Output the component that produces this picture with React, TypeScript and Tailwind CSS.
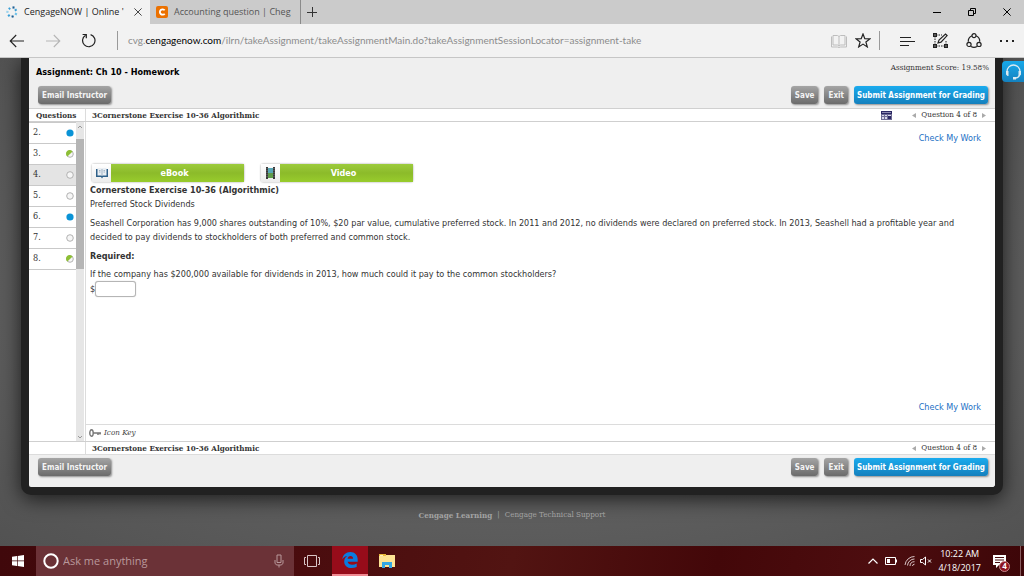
import React from "react";

type Status = "done" | "partial" | "empty";

const questions: { id: number; status: Status }[] = [
  { id: 2, status: "done" },
  { id: 3, status: "partial" },
  { id: 4, status: "empty" },
  { id: 5, status: "empty" },
  { id: 6, status: "done" },
  { id: 7, status: "empty" },
  { id: 8, status: "partial" },
];

const current = 4;

const StatusDot = ({ status }: { status: Status }) => (
  <svg width="8" height="8" viewBox="0 0 8 8">
    {status === "done" && <circle cx="4" cy="4" r="3.6" fill="#0a93d6" />}
    {status !== "done" && (
      <circle cx="4" cy="4" r="3.3" fill="#f6f6f6" stroke="#a9a9a9" strokeWidth="0.9" />
    )}
    {status === "partial" && (
      <path d="M6.6 1.4A3.7 3.7 0 1 0 1.4 6.6Z" fill="#8dbf35" />
    )}
  </svg>
);

const GreyButton = ({ children }: { children: React.ReactNode }) => (
  <button
    type="button"
    className="h-[18px] rounded-[3px] bg-linear-to-b from-[#a5a5a5] to-[#6b6b6b] px-1 font-['DejaVu_Sans_Condensed','DejaVu_Sans',sans-serif] text-[8px] leading-[19px] font-bold whitespace-nowrap text-[#f4f4f4] shadow-[1px_1px_2px_rgba(0,0,0,0.4)]"
  >
    {children}
  </button>
);

const ActionBar = () => (
  <div className="flex items-center justify-between pr-[7px] pl-[9px]">
    <GreyButton>Email Instructor</GreyButton>
    <div className="flex gap-[6px]">
      <GreyButton>Save</GreyButton>
      <GreyButton>Exit</GreyButton>
      <button
        type="button"
        className="h-[18px] rounded-[3px] bg-linear-to-b from-[#1aabee] to-[#1580bd] px-[3px] font-['DejaVu_Sans_Condensed','DejaVu_Sans',sans-serif] text-[8px] leading-[19px] font-bold whitespace-nowrap text-white shadow-[1px_1px_2px_rgba(0,0,0,0.4)]"
      >
        Submit Assignment for Grading
      </button>
    </div>
  </div>
);

const Pager = () => (
  <div className="flex items-center gap-[5px] pr-[9px] text-[#333]">
    <button type="button" aria-label="Previous question">
      <svg width="4" height="5" viewBox="0 0 4 5">
        <path d="M4 0v5L0 2.5z" fill="#aaa" />
      </svg>
    </button>
    <span>Question 4 of 8</span>
    <button type="button" aria-label="Next question">
      <svg width="4" height="5" viewBox="0 0 4 5">
        <path d="M0 0v5l4-2.5z" fill="#aaa" />
      </svg>
    </button>
  </div>
);

const TitleRow = ({ label, calculator }: { label?: string; calculator?: boolean }) => (
  <div className="flex h-3 bg-white font-['DejaVu_Serif_Condensed','DejaVu_Serif',serif] text-[8px] leading-3">
    <div className="w-[57px] shrink-0 border-r border-[#dcdcdc] pl-[7px] font-bold text-[#333]">
      {label}
    </div>
    <div className="flex flex-1 items-center pl-[6px]">
      <h2 className="flex-1 font-bold text-[#333]">3Cornerstone Exercise 10-36 Algorithmic</h2>
      {calculator && (
        <button type="button" aria-label="Calculator" className="mr-5">
          <svg width="11" height="10" viewBox="0 0 11 10">
            <path d="M0 1h11v9H0z" fill="#6d6b93" />
            <path d="M0 1h11v3H0z" fill="#2a2763" />
            <path d="M1 2h9v1H1z" fill="#8b89b0" />
            <path d="M1 5h2v1H1zM4 5h2v1H4zM7 5h3v1H7zM1 7h2v2H1zM4 7h2v2H4z" fill="#d8d8ea" />
            <path d="M7 6h3v3H7z" fill="#2a2763" />
          </svg>
        </button>
      )}
      <Pager />
    </div>
  </div>
);

const ResourceButton = ({ label, children }: { label: string; children: React.ReactNode }) => (
  <button
    type="button"
    className="flex h-[18px] w-[152px] rounded-[2px] shadow-[0_0_2px_rgba(0,0,0,0.45)]"
  >
    <span className="flex h-full w-[19px] items-center justify-center bg-linear-to-b from-white to-[#ececec]">
      {children}
    </span>
    <span className="h-full flex-1 bg-linear-to-b from-[#9ccb3c] via-[#8cbb2a] to-[#98cc2c] pr-[6px] leading-[18px] font-bold text-white">
      {label}
    </span>
  </button>
);

const TabBar = () => (
  <header className="flex h-6 shrink-0 bg-[#cbcbcb] font-['Open_Sans','Noto_Sans',sans-serif] text-[9px] leading-6">
    <div className="flex w-[150px] items-center bg-[#f2f2f2] pl-[6px]">
      <svg width="12" height="12" viewBox="0 0 12 12">
        <g strokeWidth="2.2" fill="none">
          <path d="M6.5 1.5h2" stroke="#1c5f94" />
          <path d="M9.2 3.2l1 1.6" stroke="#3aa0d8" />
          <path d="M10.3 7l-.8 2" stroke="#6dc1e8" />
          <path d="M7.6 10.2l-2 .5" stroke="#1c5f94" />
          <path d="M3.6 10.2L2.2 8.8" stroke="#3aa0d8" />
          <path d="M1.3 6.8l.2-2" stroke="#9bd3ee" />
          <path d="M2.8 3.2l1.4-1.2" stroke="#3aa0d8" />
        </g>
      </svg>
      <span className="ml-[6px] flex-1 whitespace-nowrap text-[#222]">CengageNOW | Online '</span>
      <button type="button" aria-label="Close tab" className="mr-2">
        <svg width="8" height="8" viewBox="0 0 8 8">
          <path d="M.4.4l7.2 7.2M7.6.4L.4 7.6" stroke="#333" strokeWidth="0.9" />
        </svg>
      </button>
    </div>
    <div className="flex w-[151px] items-center border-r border-[#8a8a8a] pl-[6px]">
      <span className="flex size-3 items-center justify-center rounded-[2px] bg-[#eb7100]">
        <svg width="8" height="8" viewBox="0 0 8 8">
          <path d="M6.7 2.3A2.7 2.7 0 1 0 6.7 5.7" fill="none" stroke="#fff" strokeWidth="1.8" />
        </svg>
      </span>
      <span className="ml-[6px] whitespace-nowrap text-[#555]">Accounting question | Cheg</span>
    </div>
    <button type="button" aria-label="New tab" className="ml-[6px]">
      <svg width="10" height="10" viewBox="0 0 10 10">
        <path d="M5.500 0v10M0 5.500h10" stroke="#333" />
      </svg>
    </button>
    <div className="ml-auto flex items-center gap-[27px] pr-[13px]">
      <button type="button" aria-label="Minimize">
        <svg width="8" height="8" viewBox="0 0 8 8">
          <path d="M0 4.5h8" stroke="#000" />
        </svg>
      </button>
      <button type="button" aria-label="Restore">
        <svg width="8" height="8" viewBox="0 0 8 8">
          <path d="M.5 2.5h5v5h-5zM2.5 2.5v-2h5v5h-2" fill="none" stroke="#000" />
        </svg>
      </button>
      <button type="button" aria-label="Close">
        <svg width="8" height="8" viewBox="0 0 8 8">
          <path d="M.4.4l7.2 7.2M7.6.4L.4 7.6" stroke="#000" />
        </svg>
      </button>
    </div>
  </header>
);

const AddressBar = () => (
  <nav className="flex h-[34px] shrink-0 items-center border-b border-[#c6c6c6] bg-[#f2f2f2] pr-[10px] pl-[9px]">
    <button type="button" aria-label="Back">
      <svg width="15" height="14" viewBox="0 0 15 14">
        <path d="M15 7H1.2M7.2 1L1.2 7l6 6" fill="none" stroke="#222" strokeWidth="1.1" />
      </svg>
    </button>
    <button type="button" aria-label="Forward" className="ml-[22px]">
      <svg width="15" height="14" viewBox="0 0 15 14">
        <path d="M0 7h13.8M7.8 1l6 6-6 6" fill="none" stroke="#b5b5b5" strokeWidth="1.1" />
      </svg>
    </button>
    <button type="button" aria-label="Refresh" className="ml-5">
      <svg width="15" height="15" viewBox="0 0 15 15">
        <path d="M9.6 1.6A6.2 6.2 0 1 1 4.6 2.2" fill="none" stroke="#222" strokeWidth="1.2" />
        <path d="M1.6 1.5h3.7v3.8" fill="none" stroke="#222" strokeWidth="1.2" />
      </svg>
    </button>
    <div className="ml-[21px] h-[19px] w-px bg-[#9a9a9a]" />
    <p className="ml-[10px] flex-1 font-['Lato','Open_Sans',sans-serif] text-[10px] whitespace-nowrap text-[#8c8c8c]">
      cvg.<span className="text-black">cengagenow.com</span>
      /ilrn/takeAssignment/takeAssignmentMain.do?takeAssignmentSessionLocator=assignment-take
    </p>
    <button type="button" aria-label="Reading view">
      <svg width="16" height="14" viewBox="0 0 16 14">
        <path
          d="M2 1.5h4.5L8 2.5l1.5-1H14V11H9.500L8 12l-1.500-1H2zM8 2.500V12M.5 2.500v10.500h6L8 13.500l1.500-.5h6V2.500"
          fill="none"
          stroke="#bdbdbd"
        />
      </svg>
    </button>
    <button type="button" aria-label="Favorite" className="ml-2">
      <svg width="16" height="15" viewBox="0 0 16 15">
        <path
          d="M8 1l1.800 4.700 5 .2-3.900 3.100 1.400 4.900L8 11.100l-4.300 2.800 1.400-4.900L1.200 5.900l5-.2z"
          fill="none"
          stroke="#222"
          strokeWidth="1.200"
        />
      </svg>
    </button>
    <div className="ml-2 h-[19px] w-px bg-[#9a9a9a]" />
    <button type="button" aria-label="Hub" className="ml-5">
      <svg width="15" height="10" viewBox="0 0 15 10">
        <path d="M0 1.500h11M0 5.500h15M0 9.500h9" stroke="#222" />
      </svg>
    </button>
    <button type="button" aria-label="Web note" className="ml-[18px]">
      <svg width="15" height="15" viewBox="0 0 15 15">
        <path d="M2 3v9M3 13h9M13 8v4M3 2h6" stroke="#222" strokeDasharray="1.500 1" />
        <path d="M0 0h4v4H0zM0 11h4v4H0zM11 11h4v4h-4z" fill="#222" />
        <path d="M1.500 1.500h1v1h-1zM1.500 12.500h1v1h-1zM12.500 12.500h1v1h-1z" fill="#f2f2f2" />
        <path d="M5 10l1-3 6.500-6 1.600 1.600L8 9.200z" fill="#f2f2f2" stroke="#222" strokeWidth="1.200" />
      </svg>
    </button>
    <button type="button" aria-label="Share" className="ml-[18px]">
      <svg width="16" height="16" viewBox="0 0 16 16">
        <g fill="none" stroke="#222" strokeWidth="1.200">
          <path d="M5.900 2.700A6 6 0 0 0 2.300 8.800M10.100 2.700a6 6 0 0 1 3.600 6.100M5 13.500a6 6 0 0 0 6 0" />
          <circle cx="8" cy="2.700" r="2" />
          <circle cx="3" cy="11.400" r="2.100" />
          <circle cx="13" cy="11.400" r="2.100" />
        </g>
      </svg>
    </button>
    <button type="button" aria-label="More" className="ml-[18px]">
      <svg width="14" height="4" viewBox="0 0 14 4">
        <path d="M0 1h2v2H0zM6 1h2v2H6zM12 1h2v2h-2z" fill="#222" />
      </svg>
    </button>
  </nav>
);

const QuestionList = () => (
  <aside className="flex w-[57px] shrink-0 border-r border-[#dcdcdc]">
    <ul className="flex-1 border-t border-[#c9c9c9] font-['DejaVu_Serif_Condensed','DejaVu_Serif',serif] text-[9px] text-[#333]">
      {questions.map((q) => (
        <li key={q.id} className="border-b border-[#c9c9c9]">
          <a
            href={`#question-${q.id}`}
            className={`flex h-5 items-center justify-between pr-[2px] pl-1 ${
              q.id === current ? "bg-[#e4e4e4]" : ""
            }`}
          >
            <span>{q.id}.</span>
            <StatusDot status={q.status} />
          </a>
        </li>
      ))}
    </ul>
    <div className="mr-px flex w-2 flex-col items-center bg-[#e6e6e6]">
      <svg width="8" height="17" viewBox="0 0 8 17">
        <path d="M2 6l2-2 2 2" fill="none" stroke="#999" />
      </svg>
      <div className="h-[130px] w-2 bg-[#b5b5b5]" />
      <svg width="8" height="8" viewBox="0 0 8 8" className="mt-auto">
        <path d="M2 3l2 2 2-2" fill="none" stroke="#999" />
      </svg>
    </div>
  </aside>
);

const QuestionBody = () => (
  <article className="flex flex-1 flex-col px-1 pt-[9px] pb-[10px] font-['DejaVu_Sans_Condensed','DejaVu_Sans',sans-serif] text-[9px] leading-[14px] text-[#333]">
    <a href="#check" className="mr-[10px] self-end text-[#1b6fc4]">
      Check My Work
    </a>
    <div className="mt-[19px] flex gap-[17px] pl-[2px]">
      <ResourceButton label="eBook">
        <svg width="12" height="11" viewBox="0 0 12 11">
          <path d="M0 1h12v8H7L6 10.500 5 9H0z" fill="#2e6089" />
          <path d="M1.500 0h4L6 .7l.5-.7h4v7.500h-4L6 8l-.5-.5h-4z" fill="#e9eef3" />
          <path d="M6 1v6.500M3 2.500h1.500M3 4h1.500M7.500 2.500H9M7.500 4H9" stroke="#8fa5b8" strokeWidth="0.800" />
        </svg>
      </ResourceButton>
      <ResourceButton label="Video">
        <svg width="9" height="12" viewBox="0 0 9 12">
          <path d="M0 0h2v12H0zM7 0h2v12H7z" fill="#3a3a3a" />
          <path d="M2 1h5v5H2z" fill="#58a7b5" />
          <path d="M2 6h5v5H2z" fill="#5f9b4a" />
          <path d="M1 1v10M8 1v10" stroke="#999" strokeWidth="0.600" strokeDasharray="1 1" />
        </svg>
      </ResourceButton>
    </div>
    <h1 className="mt-px font-bold">Cornerstone Exercise 10-36 (Algorithmic)</h1>
    <p>Preferred Stock Dividends</p>
    <p className="mt-[5px] pr-6">
      Seashell Corporation has 9,000 shares outstanding of 10%, $20 par value, cumulative preferred
      stock. In 2011 and 2012, no dividends were declared on preferred stock. In 2013, Seashell had
      a profitable year and decided to pay dividends to stockholders of both preferred and common
      stock.
    </p>
    <p className="mt-[5px] font-bold">Required:</p>
    <label htmlFor="answer" className="mt-1">
      If the company has $200,000 available for dividends in 2013, how much could it pay to the
      common stockholders?
    </label>
    <div className="flex items-center">
      <span>$</span>
      <input
        id="answer"
        type="text"
        className="h-4 w-[41px] rounded-[3px] border border-[#b5b5b5] bg-white px-1 shadow-[0_0_1px_rgba(0,0,0,0.3)]"
      />
    </div>
    <a href="#check" className="mt-auto mr-[10px] self-end text-[#1b6fc4]">
      Check My Work
    </a>
  </article>
);

const Taskbar = () => (
  <footer className="flex h-[30px] shrink-0 items-center bg-[linear-gradient(100deg,#40080b,#4a0c0e_30%,#521412_50%,#430709_70%,#4d0d0f_85%,#3d0608)] font-['Open_Sans','Noto_Sans',sans-serif] text-white">
    <button type="button" aria-label="Start" className="flex w-9 shrink-0 justify-center">
      <svg width="12" height="12" viewBox="0 0 12 12">
        <path d="M0 1.700l5-.7v4.600H0zM5.700.9L12 0v5.600H5.700zM0 6.300h5V11l-5-.7zM5.700 6.300H12V12l-6.300-.9z" fill="#fff" />
      </svg>
    </button>
    <label className="flex h-full w-[258px] items-center bg-[#6b3237] pl-[7px]">
      <svg width="16" height="16" viewBox="0 0 16 16">
        <circle cx="8" cy="8" r="6.700" fill="none" stroke="#fff" strokeWidth="2" />
      </svg>
      <input
        type="text"
        aria-label="Search"
        placeholder="Ask me anything"
        className="ml-1 min-w-0 flex-1 text-[11px] placeholder:text-[#b9989b]"
      />
      <svg width="10" height="14" viewBox="0 0 10 14" className="mr-[10px]">
        <path d="M3 1h4v7.500H3zM1 6v3.200L2.500 11h5L9 9.200V6M5 11v2.500" fill="none" stroke="#b9989b" />
      </svg>
    </label>
    <button type="button" aria-label="Task view" className="ml-[10px]">
      <svg width="16" height="12" viewBox="0 0 16 12">
        <path d="M3.500.5h9v11h-9zM2 2.500H.5v7H2M14 2.500h1.500v7H14" fill="none" stroke="#d9c6c7" />
      </svg>
    </button>
    <button
      type="button"
      aria-label="Microsoft Edge"
      className="ml-3 flex h-full w-9 items-center justify-center border-b-2 border-[#f08a92] bg-[#970c1a]"
    >
      <svg width="16" height="16" viewBox="0 0 16 16">
        <path
          d="M.3 7.300C.8 3 4 0 8.300 0c4.700 0 7.400 3.300 7.400 7.500v2.300H5.600c.3 2.100 2.200 3 4.600 3 1.700 0 3.200-.4 4.500-1.200v3.400c-1.500.7-3.200 1-5 1-4.700 0-7.500-2.600-7.500-6.600 0-2.500 1.200-4.300 3.100-5.400C3.200 4.200 1.300 5.500.3 7.300zM5.600 6.700h5.500c0-1.800-.9-2.800-2.500-2.800-1.700 0-2.800 1.200-3 2.800z"
          fill="#0a7be0"
        />
      </svg>
    </button>
    <button type="button" aria-label="File Explorer" className="ml-[11px]">
      <svg width="16" height="14" viewBox="0 0 16 14">
        <path d="M0 0h7v1h9v12H0z" fill="#fde495" />
        <path d="M0 0h7v2H0z" fill="#e9b93c" />
        <path d="M1 1h3v1H1z" fill="#fff3c0" />
        <path d="M3 8h10v6h-3v-3H6v3H3z" fill="#33a7e4" />
      </svg>
    </button>
    <div className="ml-auto flex items-center">
      <svg width="10" height="6" viewBox="0 0 10 6">
        <path d="M.5 5.500L5 1l4.500 4.500" fill="none" stroke="#fff" strokeWidth="1.200" />
      </svg>
      <svg width="12" height="8" viewBox="0 0 12 8" className="ml-[7px]">
        <path d="M.5.5h10v7H.5zM11.500 2.500v3" fill="none" stroke="#fff" />
        <path d="M2 2h3v4H2z" fill="#fff" />
      </svg>
      <svg width="12" height="12" viewBox="0 0 12 12" className="ml-[7px]">
        <g fill="none" stroke="#d8c3c4">
          <path d="M1 10A9.500 9.500 0 0 1 10.500 1.500" />
          <path d="M3.500 10.500A7 7 0 0 1 10.500 4M6 11a4.500 4.500 0 0 1 4.500-4.300M8.500 11a2 2 0 0 1 2-1.800" />
        </g>
      </svg>
      <svg width="12" height="10" viewBox="0 0 12 10" className="ml-1">
        <path d="M.5 3.500h2L5.500 1v8L2.500 6.500h-2zM8 3.500l3 3M11 3.500l-3 3" fill="none" stroke="#fff" />
      </svg>
      <div className="ml-[6px] text-center text-[9px] leading-[14px] whitespace-nowrap">
        <div>10:22 AM</div>
        <div>4/18/2017</div>
      </div>
      <button type="button" aria-label="Notifications" className="relative ml-3">
        <svg width="13" height="13" viewBox="0 0 13 13">
          <path d="M0 0h13v10H6l-3 3v-3H0z" fill="#fff" />
          <path d="M2 2.500h9M2 5h9M2 7.500h5" stroke="#4a0c0e" />
        </svg>
        <span className="absolute top-[6px] left-[6px] flex size-[11px] items-center justify-center rounded-full border border-[#c98a8e] bg-[#8d1420] text-[8px] leading-none font-bold">
          4
        </span>
      </button>
      <div className="ml-[14px] h-[30px] w-1 border-l border-[#8a5d5f]" />
    </div>
  </footer>
);

const App = () => {
  return (
    <div className="flex h-screen min-h-[576px] flex-col overflow-hidden bg-[#5b5b5b]">
      <TabBar />
      <AddressBar />
      <main className="relative flex flex-1 flex-col overflow-hidden bg-[radial-gradient(ellipse_at_center,#5e5e5e_60%,#525252)]">
        <section className="mx-[21px] flex flex-1 flex-col rounded-b-[10px] border-8 border-t-0 border-[#212121] bg-[#efefef] shadow-[0_4px_20px_rgba(0,0,0,0.7)]">
          <div className="flex justify-between pt-1 pr-[6px] pl-[7px] text-[#333]">
            <h1 className="pt-[3px] font-['DejaVu_Sans_Condensed','DejaVu_Sans',sans-serif] text-[9px] leading-[15px] font-bold text-black">
              Assignment: Ch 10 - Homework
            </h1>
            <p className="font-['DejaVu_Serif_Condensed','DejaVu_Serif',serif] text-[8px] leading-3">
              Assignment Score: 19.58%
            </p>
          </div>
          <div className="border-b border-[#d0d0d0] pt-[6px] pb-1">
            <ActionBar />
          </div>
          <TitleRow label="Questions" calculator />
          <div className="flex flex-1 border-y border-[#cfcfcf] bg-white">
            <QuestionList />
            <div className="flex flex-1 flex-col">
              <QuestionBody />
              <div className="flex h-[17px] items-center gap-[3px] border-t border-[#dcdcdc] pl-[3px] font-['DejaVu_Serif_Condensed','DejaVu_Serif',serif] text-[8px] leading-3 text-[#444] italic">
                <svg width="12" height="8" viewBox="0 0 12 8">
                  <ellipse cx="2.500" cy="4" rx="1.700" ry="3.200" fill="none" stroke="#777" strokeWidth="1.400" />
                  <path d="M4 4h8M9 4v2M11 4v1.500" stroke="#777" strokeWidth="1.500" />
                </svg>
                <a href="#icon-key">Icon Key</a>
              </div>
            </div>
          </div>
          <TitleRow />
          <div className="border-t border-[#dcdcdc] pt-[3px] pb-[11px]">
            <ActionBar />
          </div>
        </section>
        <div className="flex h-[51px] shrink-0 items-center justify-center gap-[5px] pb-3 font-['DejaVu_Serif_Condensed','DejaVu_Serif',serif] text-[8px] text-[#a3a3a3]">
          <a href="#cengage" className="font-bold">
            Cengage Learning
          </a>
          <span>|</span>
          <a href="#support">Cengage Technical Support</a>
        </div>
        <button
          type="button"
          aria-label="Support"
          className="absolute top-[3px] right-0 flex h-[21px] w-[22px] items-center justify-center rounded-l-[4px] bg-linear-to-b from-[#18a9ea] to-[#1481bf]"
        >
          <svg width="17" height="17" viewBox="0 0 17 17">
            <path d="M2 10V8.500a6.500 6.500 0 0 1 13 0V10c0 3-2 4.800-5 5.300" fill="none" stroke="#dbe9f1" strokeWidth="1.300" />
            <path d="M1 8h2.500v5H2.500L1 11.500zM16 8h-2.500v5h1L16 11.500zM8 14h3v2.500H8z" fill="#dbe9f1" />
          </svg>
        </button>
      </main>
      <Taskbar />
    </div>
  );
};

export default App;
